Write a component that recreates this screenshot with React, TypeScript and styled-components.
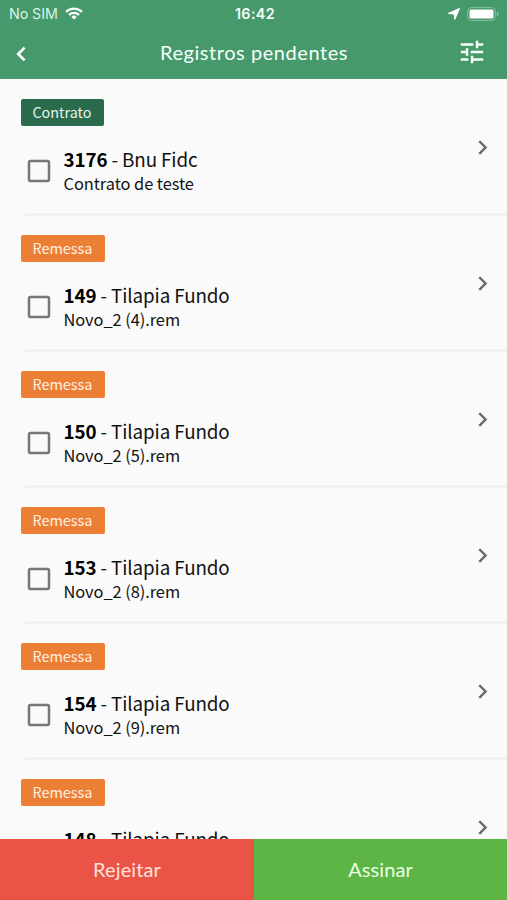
import React from "react";
import styled, { createGlobalStyle } from "styled-components";
import { MdChevronRight, MdCheckBoxOutlineBlank, MdTune } from "react-icons/md";

const GlobalStyle = createGlobalStyle`
  * { box-sizing: border-box; }
  body { margin: 0; background: #fafafa; }
`;

const Screen = styled.main`
  display: flex;
  flex-direction: column;
  width: 100%;
  height: 100vh;
  overflow: hidden;
  background: #fafafa;
  color: #111;
  font-family: "Noto Sans CJK SC", "Noto Sans", sans-serif;
`;

const Header = styled.header`
  flex: none;
  height: 79px;
  background: #46996b;
  color: #f6fff9;
`;

const StatusBar = styled.div`
  display: grid;
  grid-template-columns: 1fr auto 1fr;
  align-items: center;
  height: 27px;
  padding: 0 8px 0 9px;
  font: 400 14.3px/27px Inter, sans-serif;
`;

const StatusGroup = styled.div<{ $end?: boolean }>`
  display: flex;
  align-items: center;
  justify-content: ${(p) => (p.$end ? "flex-end" : "flex-start")};
  gap: 7px;
  color: ${(p) => (p.$end ? "#fff" : "#dcf3e5")};
  letter-spacing: -0.1px;
`;

const Clock = styled.time`
  padding-left: 2px;
  font-weight: 600;
  letter-spacing: 0.4px;
`;

const NavBar = styled.div`
  display: grid;
  grid-template-columns: 60px 1fr 60px;
  align-items: center;
  height: 52px;
  padding-left: 1px;
`;

const IconButton = styled.button<{ $side: "left" | "right" }>`
  display: flex;
  justify-content: ${(p) => (p.$side === "left" ? "flex-start" : "flex-end")};
  padding: ${(p) => (p.$side === "left" ? "2px 0 0 14px" : "0 20px 2px 0")};
  border: 0;
  background: none;
  color: inherit;
`;

const Title = styled.h1`
  margin: 0;
  padding-bottom: 2px;
  text-align: center;
  font: 400 20px/50px Lato, sans-serif;
  letter-spacing: 0.55px;
`;

const List = styled.ul`
  flex: 1;
  min-height: 0;
  margin: 0;
  padding: 0;
  overflow: hidden;
  list-style: none;
`;

const Item = styled.li`
  display: flex;
  flex-direction: column;
  align-items: flex-start;
  height: 136px;
  padding: 20px 0 0 20.5px;
`;

const Badge = styled.span<{ $kind: Kind }>`
  width: ${(p) => (p.$kind === "Contrato" ? 83 : 84)}px;
  height: 27px;
  border-radius: 2px;
  background: ${(p) => (p.$kind === "Contrato" ? "#2b6a4c" : "#ea7f35")};
  color: ${(p) => (p.$kind === "Contrato" ? "#e2f5ea" : "#fff0e0")};
  font-size: 14.4px;
  line-height: 26px;
  text-align: center;
  letter-spacing: 0;
`;

const ItemBody = styled.div`
  display: flex;
  align-items: flex-start;
  width: 100%;
  height: 88px;
  padding-top: 21px;
`;

const CheckSlot = styled.span`
  display: flex;
  width: 43px;
  padding: 9px 0 0 3px;
  color: #77777a;
`;

const Texts = styled.div`
  flex: 1;
`;

const Name = styled.div`
  font-size: 18.8px;
  line-height: 24px;
  letter-spacing: -0.1px;
  b { font-weight: 700; color: #000; }
`;

const Detail = styled.div`
  font-size: 16.4px;
  line-height: 24px;
  letter-spacing: -0.05px;
`;

const Arrow = styled.span`
  display: flex;
  padding: 0 10px 0 0;
  margin-top: -14px;
  color: #6b6b6e;
`;

const Divider = styled.hr`
  width: calc(100% - 4px);
  height: 2px;
  margin: 0 0 0 4px;
  border: 0;
  flex: none;
  transform: translateY(0.6px);
  background: #eeeeee;
`;

const Actions = styled.footer`
  display: grid;
  grid-template-columns: 254px 1fr;
  flex: none;
  height: 61px;
`;

const Action = styled.button<{ $tone: "reject" | "sign" }>`
  border: 0;
  padding: 0;
  background: ${(p) => (p.$tone === "reject" ? "#ea5446" : "#5cb544")};
  color: ${(p) => (p.$tone === "reject" ? "#ffe0da" : "#e9ffe2")};
  font: 400 20px/61px Lato, sans-serif;
  letter-spacing: 0.1px;
`;

const BackIcon = () => (
  <svg width="12" height="16" viewBox="0 0 12 16" fill="none" stroke="#fff" strokeWidth="2.7">
    <path d="M9.6 1.6 3.2 8l6.4 6.4" />
  </svg>
);

const WifiIcon = () => (
  <svg width="18" height="13" viewBox="0 0 18 13" fill="none" stroke="#fff" strokeWidth="2.2">
    <path d="M1.1 4.9a11.2 11.2 0 0 1 15.8 0" />
    <path d="M4 7.9a7.1 7.1 0 0 1 10 0" />
    <path d="M9 12.6 6.3 9.9a3.8 3.8 0 0 1 5.4 0z" fill="#fff" stroke="none" />
  </svg>
);

const LocationIcon = () => (
  <svg width="12" height="12" viewBox="0 0 12 12" fill="#fff">
    <path d="M11.4.6 6.8 11.3 6.1 6 .6 5.4z" stroke="#fff" strokeWidth="1.1" strokeLinejoin="round" />
  </svg>
);

const BatteryIcon = () => (
  <svg width="32" height="14" viewBox="0 0 32 14">
    <rect x=".6" y=".6" width="27.8" height="12.8" rx="3.6" fill="none" stroke="#86c0a0" />
    <rect x="2.5" y="2.4" width="24" height="9.2" rx="1.6" fill="#fff" />
    <path d="M29.8 4.8q1.9.8 1.9 2.2t-1.9 2.2z" fill="#86c0a0" />
  </svg>
);

type Kind = "Contrato" | "Remessa";

const records: { kind: Kind; id: number; name: string; detail: string }[] = [
  { kind: "Contrato", id: 3176, name: "Bnu Fidc", detail: "Contrato de teste" },
  { kind: "Remessa", id: 149, name: "Tilapia Fundo", detail: "Novo_2 (4).rem" },
  { kind: "Remessa", id: 150, name: "Tilapia Fundo", detail: "Novo_2 (5).rem" },
  { kind: "Remessa", id: 153, name: "Tilapia Fundo", detail: "Novo_2 (8).rem" },
  { kind: "Remessa", id: 154, name: "Tilapia Fundo", detail: "Novo_2 (9).rem" },
  { kind: "Remessa", id: 148, name: "Tilapia Fundo", detail: "Novo_2 (3).rem" },
];

export default function App() {
  return (
    <Screen>
      <GlobalStyle />
      <Header>
        <StatusBar>
          <StatusGroup>
            No SIM
            <WifiIcon />
          </StatusGroup>
          <Clock>16:42</Clock>
          <StatusGroup $end>
            <LocationIcon />
            <BatteryIcon />
          </StatusGroup>
        </StatusBar>
        <NavBar>
          <IconButton $side="left" aria-label="Voltar">
            <BackIcon />
          </IconButton>
          <Title>Registros pendentes</Title>
          <IconButton $side="right" aria-label="Filtrar">
            <MdTune size={30} />
          </IconButton>
        </NavBar>
      </Header>
      <List>
        {records.map((r) => (
          <Item key={r.id}>
            <Badge $kind={r.kind}>{r.kind}</Badge>
            <ItemBody>
              <CheckSlot>
                <MdCheckBoxOutlineBlank size={30} />
              </CheckSlot>
              <Texts>
                <Name>
                  <b>{r.id}</b> - {r.name}
                </Name>
                <Detail>{r.detail}</Detail>
              </Texts>
              <Arrow>
                <MdChevronRight size={29} />
              </Arrow>
            </ItemBody>
            <Divider />
          </Item>
        ))}
      </List>
      <Actions>
        <Action $tone="reject">Rejeitar</Action>
        <Action $tone="sign">Assinar</Action>
      </Actions>
    </Screen>
  );
}
